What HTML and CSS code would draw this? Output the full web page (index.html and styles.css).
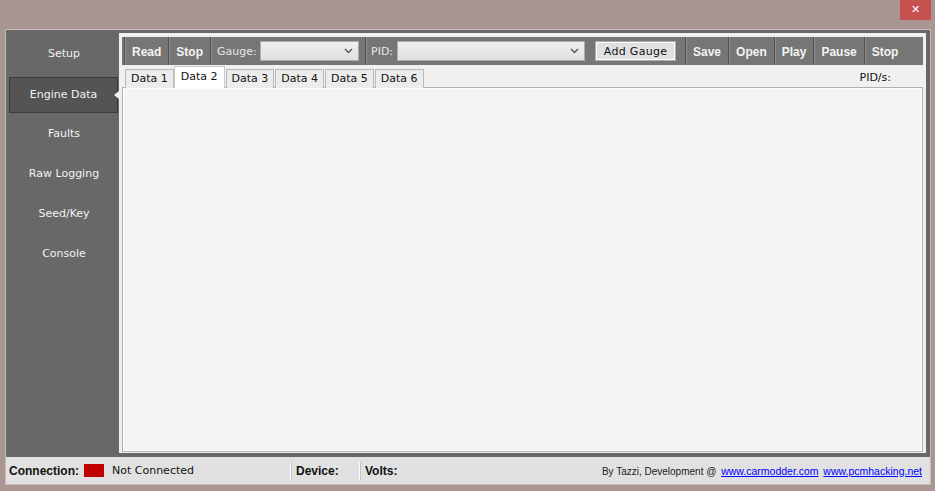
FILE: index.html
```html
<!DOCTYPE html>
<html lang="en">
<head>
    <meta charset="UTF-8">
    <title>Engine Data</title>
    <link rel="stylesheet" href="styles.css">
</head>
<body>
    <div class="titlebar">
        <div class="close-btn">&#x2715;</div>
    </div>

    <div class="window">
        <div class="main">
            <nav class="sidebar">
                <div class="nav-item">Setup</div>
                <div class="nav-item active">Engine Data</div>
                <div class="nav-item">Faults</div>
                <div class="nav-item">Raw Logging</div>
                <div class="nav-item">Seed/Key</div>
                <div class="nav-item">Console</div>
            </nav>

            <div class="content">
                <div class="toolbar">
                    <span class="tb-btn">Read</span>
                    <span class="tb-btn">Stop</span>
                    <div class="tb-group gauge-group">
                        <span class="tb-label">Gauge:</span>
                        <div class="combo gauge-combo">
                            <svg width="9" height="6" viewBox="0 0 9 6"><polyline points="1,1 4.5,4.5 8,1" fill="none" stroke="#555" stroke-width="1.4"/></svg>
                        </div>
                    </div>
                    <div class="tb-group pid-group">
                        <span class="tb-label">PID:</span>
                        <div class="combo pid-combo">
                            <svg width="9" height="6" viewBox="0 0 9 6"><polyline points="1,1 4.5,4.5 8,1" fill="none" stroke="#555" stroke-width="1.4"/></svg>
                        </div>
                        <span class="add-btn">Add Gauge</span>
                    </div>
                    <span class="tb-btn">Save</span>
                    <span class="tb-btn">Open</span>
                    <span class="tb-btn">Play</span>
                    <span class="tb-btn">Pause</span>
                    <span class="tb-btn">Stop</span>
                </div>

                <div class="tabs-row">
                    <div class="tabs">
                        <span class="tab">Data 1</span>
                        <span class="tab selected">Data 2</span>
                        <span class="tab">Data 3</span>
                        <span class="tab">Data 4</span>
                        <span class="tab">Data 5</span>
                        <span class="tab">Data 6</span>
                    </div>
                    <span class="pid-rate">PID/s:</span>
                </div>

                <div class="tab-panel"></div>
            </div>
        </div>

        <div class="statusbar">
            <div class="status-conn">
                <b>Connection:</b>
                <span class="led"></span>
                <span>Not Connected</span>
            </div>
            <div class="status-device"><b>Device:</b></div>
            <div class="status-volts"><b>Volts:</b></div>
            <div class="credits">
                By Tazzi, Development @
                <a href="#">www.carmodder.com</a>
                <a href="#">www.pcmhacking.net</a>
            </div>
        </div>
    </div>
</body>
</html>
```

FILE: styles.css
```css
body {
    margin: 0;
    background: #a99591;
    font-family: "DejaVu Sans", Verdana, sans-serif;
    font-size: 11px;
    width: 935px;
    height: 491px;
    overflow: hidden;
}
b {
    font-family: "Liberation Sans", Arial, sans-serif;
    font-size: 12px;
}
.titlebar {
    height: 29px;
    display: flex;
    justify-content: flex-end;
    align-items: flex-start;
    padding-right: 4px;
}
.close-btn {
    width: 31px;
    height: 20px;
    background: #c75050;
    color: #fff;
    font-size: 11px;
    font-weight: bold;
    text-align: center;
    line-height: 20px;
}
.window {
    margin-left: 5px;
    width: 924px;
    border: 1px solid #c6bcb9;
    background: #686868;
}
.main {
    display: flex;
    height: 427px;
}
.sidebar {
    flex-shrink: 0;
    width: 113px;
    padding-top: 4px;
    color: #f2f2f2;
}
.nav-item {
    position: relative;
    height: 40px;
    line-height: 40px;
    text-align: center;
    padding-left: 3px;
}
.nav-item.active {
    margin: 3px 1px 1px 3px;
    height: 34px;
    line-height: 34px;
    padding-left: 0;
    background: #545454;
    border: 1px solid #3c3c3c;
}
.nav-item.active::after {
    content: "";
    position: absolute;
    right: -2px;
    top: 13px;
    border-style: solid;
    border-width: 4px 5px 4px 0;
    border-color: transparent #f0f0f0 transparent transparent;
}
.content {
    flex: 1;
    min-width: 0;
    margin: 3px 4px 4px 0;
    background: #f0f0f0;
    display: flex;
    flex-direction: column;
}
.toolbar {
    margin: 4px 3px 0 3px;
    height: 28px;
    background: #767676;
    display: flex;
    align-items: stretch;
    color: #f4f4f4;
    padding-left: 2px;
}
.tb-btn {
    display: flex;
    align-items: center;
    justify-content: center;
    font-family: "Liberation Sans", Arial, sans-serif;
    font-weight: bold;
    font-size: 12px;
    padding: 1px 7px 0;
    border-left: 1px solid #4e4e4e;
    box-shadow: inset 1px 0 #8e8e8e;
}
.tb-group {
    display: flex;
    align-items: center;
    border-left: 1px solid #4e4e4e;
    box-shadow: inset 1px 0 #8e8e8e;
}
.gauge-group {
    width: 148px;
    padding-left: 6px;
}
.pid-group {
    width: 314px;
    padding-left: 5px;
}
.tb-label {
    color: #e8e8e8;
    margin-right: 3px;
}
.pid-group .tb-label {
    margin-right: 4px;
}
.combo {
    height: 20px;
    box-sizing: border-box;
    border: 1px solid #adadad;
    background: linear-gradient(#efefef, #e0e0e0);
    display: flex;
    align-items: center;
    justify-content: flex-end;
    padding-right: 5px;
}
.gauge-combo {
    width: 99px;
}
.pid-combo {
    width: 188px;
}
.add-btn {
    margin-left: 10px;
    width: 81px;
    height: 20px;
    box-sizing: border-box;
    border: 1px solid #adadad;
    background: #e1e1e1;
    box-shadow: inset 0 0 0 1px #fdfdfd;
    color: #111;
    font-size: 11px;
    letter-spacing: 0.3px;
    display: flex;
    align-items: center;
    justify-content: center;
}
.tabs-row {
    display: flex;
    align-items: flex-end;
    justify-content: space-between;
    height: 22px;
    margin: 0 3px;
}
.tabs {
    display: flex;
    align-items: flex-end;
    padding-left: 3px;
    position: relative;
    top: 1px;
}
.tab {
    height: 18px;
    line-height: 18px;
    padding: 0 5px;
    margin-right: 1px;
    background: #ececec;
    border: 1px solid #b9b9b9;
    border-bottom: none;
    color: #111;
}
.tab.selected {
    height: 21px;
    line-height: 19px;
    padding: 0 6px;
    background: #fff;
    border-color: #c9c9c9;
    margin: 0 1px 0 -1px;
    position: relative;
    z-index: 1;
}
.pid-rate {
    align-self: center;
    margin-right: 32px;
    color: #111;
    padding-top: 2px;
}
.tab-panel {
    flex: 1;
    margin: 0 3px 1px 3px;
    background: #f4f4f4;
    border: 1px solid #b0b0b0;
    box-shadow: inset 0 0 0 1px #fdfdfd;
}
.statusbar {
    height: 27px;
    background: #e1e1e1;
    display: flex;
    align-items: center;
    color: #111;
}
.status-conn {
    width: 282px;
    padding-left: 3px;
    display: flex;
    align-items: center;
}
.led {
    width: 20px;
    height: 13px;
    background: #c00000;
    margin: 0 8px 0 5px;
}
.status-device,
.status-volts {
    height: 18px;
    line-height: 18px;
    border-left: 1px solid #c4c4c4;
    box-shadow: -1px 0 #fafafa;
    padding-left: 4px;
}
.status-device {
    width: 64px;
}
.credits {
    flex: 1;
    text-align: right;
    padding-right: 8px;
    font-family: "Liberation Sans", Arial, sans-serif;
    font-size: 10px;
    color: #222;
}
.credits a {
    color: #0000ff;
    font-size: 10.5px;
    margin-left: 2px;
}
```
